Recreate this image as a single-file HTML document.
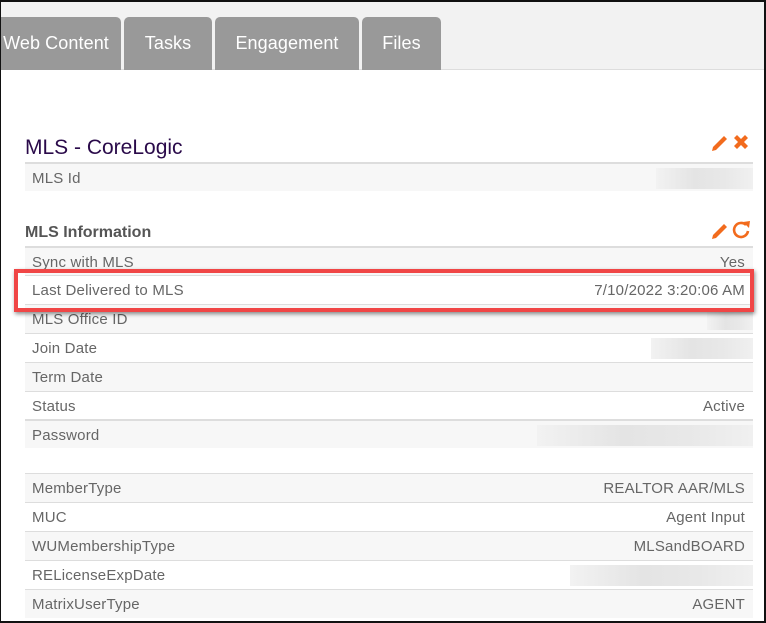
<!DOCTYPE html>
<html><head><style>
*{margin:0;padding:0;box-sizing:border-box}
body{width:766px;height:623px;overflow:hidden;background:#fff;font-family:"Liberation Sans",sans-serif;position:relative}
.frame{position:absolute;left:0;top:0;width:766px;height:623px;border:2px solid #111;border-left-width:1px;border-bottom-width:2px;z-index:10;pointer-events:none}
.top{position:absolute;left:0;top:0;width:766px;height:70px;background:#f2f2f2;border-bottom:1px solid #ddd}
.tab{position:absolute;top:17px;height:53px;background:#999;color:#fff;font-size:18px;border-radius:5px 5px 0 0;text-align:center;line-height:53px;letter-spacing:0.1px}
.h1{position:absolute;left:25px;top:136px;font-size:21px;color:#2a0a4a}
.h2{position:absolute;left:25px;top:224px;font-size:16px;font-weight:bold;color:#555}
.row{position:absolute;left:25px;width:728px;height:29px;border-top:1px solid #ddd;font-size:15px;color:#666;line-height:29px;padding:0 8px 0 7px;letter-spacing:0.2px}
.row.g{background:#f7f7f7}
.row .v{position:absolute;right:8px;top:0}
.blur{position:absolute;right:0;top:4px;height:21px;background:linear-gradient(90deg,#f2f2f2,#e4e4e4 40%,#e8e8e8 70%,#f0f0f0)}
.hl{position:absolute;left:14px;top:269px;width:740px;height:43px;border:4px solid #f04646;box-shadow:1px 2px 4px rgba(0,0,0,.45);z-index:5}
svg{position:absolute}
</style></head><body>
<div class="frame"></div>
<div class="top"></div>
<div class="tab" style="left:-9px;width:130px">Web Content</div>
<div class="tab" style="left:124px;width:88px">Tasks</div>
<div class="tab" style="left:215px;width:144px">Engagement</div>
<div class="tab" style="left:362px;width:79px">Files</div>

<div class="h1">MLS - CoreLogic</div>
<svg style="left:710px;top:134px" width="42" height="18" viewBox="0 0 42 18">
<path d="M2 17 L3 13 L14 2 L17 5 L6 16 Z" fill="#f26b1d"/>
<path d="M24 4 L27 1 L31 5 L35 1 L38 4 L34 8 L38 12 L35 15 L31 11 L27 15 L24 12 L28 8 Z" fill="#f26b1d"/>
</svg>
<div class="row g" style="top:162px;border-top:2px solid #ddd">MLS Id<div class="blur" style="width:97px"></div></div>

<div class="h2">MLS Information</div>
<svg style="left:710px;top:220px" width="44" height="20" viewBox="0 0 44 20">
<path d="M2 19 L3 15 L14 4 L17 7 L6 18 Z" fill="#f26b1d"/>
<path d="M38 11 A7 7 0 1 1 36 5" stroke="#f26b1d" stroke-width="2.6" fill="none"/>
<path d="M33 2 L40 1 L39 8 Z" fill="#f26b1d"/>
</svg>
<div class="row g" style="top:246px;border-top:2px solid #ddd">Sync with MLS<span class="v">Yes</span></div>
<div class="row" style="top:275px">Last Delivered to MLS<span class="v">7/10/2022 3:20:06 AM</span></div>
<div class="hl"></div>
<div class="row g" style="top:304px">MLS Office ID<div class="blur" style="width:46px"></div></div>
<div class="row" style="top:333px">Join Date<div class="blur" style="width:102px"></div></div>
<div class="row g" style="top:362px">Term Date</div>
<div class="row" style="top:391px">Status<span class="v">Active</span></div>
<div class="row g" style="top:419px;border-top:2px solid #ddd">Password<div class="blur" style="width:216px"></div></div>

<div class="row g" style="top:473px">MemberType<span class="v">REALTOR AAR/MLS</span></div>
<div class="row" style="top:502px">MUC<span class="v">Agent Input</span></div>
<div class="row g" style="top:531px">WUMembershipType<span class="v">MLSandBOARD</span></div>
<div class="row" style="top:560px">RELicenseExpDate<div class="blur" style="width:183px"></div></div>
<div class="row g" style="top:589px">MatrixUserType<span class="v">AGENT</span></div>
</body></html>
